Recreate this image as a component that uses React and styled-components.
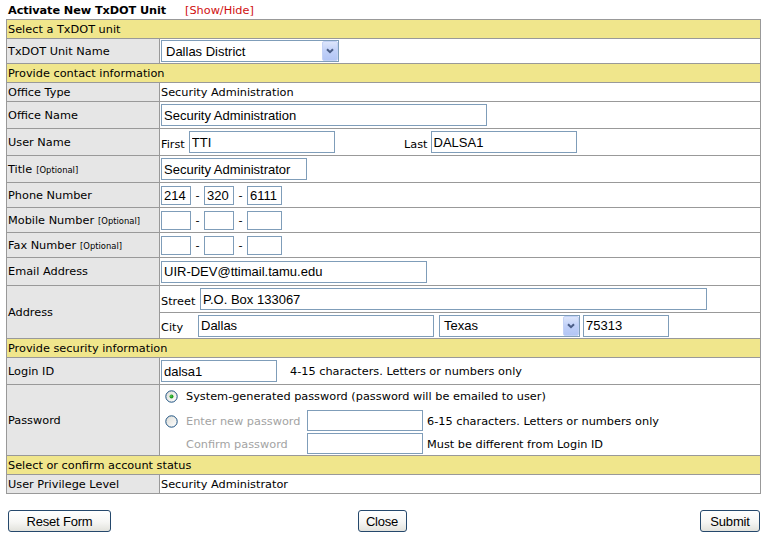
import React from "react";
import styled, { createGlobalStyle } from "styled-components";

const Global = createGlobalStyle`
  html, body { margin: 0; padding: 0; background: #fff; }
  body {
    font-family: "DejaVu Sans", Verdana, sans-serif;
    font-size: 11.3px;
    color: #000;
  }
`;

const Page = styled.div`
  width: 766px;
  padding-left: 6px;
  box-sizing: border-box;
`;

const TitleBar = styled.div`
  display: flex;
  align-items: center;
  height: 19px;
  padding: 1px 0 0 2px;
  box-sizing: border-box;
  gap: 19px;
`;

const Title = styled.span`
  font-weight: bold;
  letter-spacing: -0.1px;
`;

const ToggleLink = styled.a`
  color: #d01010;
  text-decoration: none;
  cursor: pointer;
`;

const FormTable = styled.div`
  width: 755px;
  box-sizing: border-box;
  border: 1px solid #999;
  border-bottom: none;
`;

const Section = styled.div`
  height: 18px;
  background: #f0e68c;
  border-bottom: 1px solid #999;
  display: flex;
  align-items: center;
  padding-left: 1px;
`;

const Row = styled.div`
  display: grid;
  grid-template-columns: 153px 1fr;
  height: ${(p) => p.$h}px;
  border-bottom: 1px solid #999;
`;

const Label = styled.div`
  background: #e6e6e6;
  border-right: 1px solid #999;
  display: flex;
  align-items: center;
  padding-left: 1px;
  white-space: nowrap;
`;

const Optional = styled.span`
  font-size: 8.4px;
  margin-left: 4px;
  margin-top: 2px;
`;

const Value = styled.div`
  display: flex;
  align-items: center;
  padding-left: 1px;
  white-space: nowrap;
`;

const TextInput = styled.input.attrs({ type: "text", readOnly: true })`
  width: ${(p) => p.$w}px;
  height: ${(p) => p.$hh || 22}px;
  box-sizing: border-box;
  border: 1px solid #7f9db9;
  margin: 0 0 0 ${(p) => p.$ml || 0}px;
  padding: 0 2px;
  font-family: "Liberation Sans", Arial, sans-serif;
  font-size: 13px;
  color: #000;
  background: #fff;
  outline: none;
`;

const SelectBox = styled.div`
  width: ${(p) => p.$w}px;
  height: 22px;
  box-sizing: border-box;
  border: 1px solid #7f9db9;
  margin-left: ${(p) => p.$ml || 0}px;
  display: flex;
  align-items: center;
  justify-content: space-between;
  padding-left: 4px;
  font-family: "Liberation Sans", Arial, sans-serif;
  font-size: 13px;
  background: #fff;
`;

const ArrowButton = styled.span`
  width: 16px;
  height: 20px;
  box-sizing: border-box;
  border: 1px solid #c3d2f6;
  border-radius: 2px;
  background: linear-gradient(#dde6fb, #c0d0f8 50%, #b3c6f5);
  display: flex;
  align-items: center;
  justify-content: center;
`;

const Caption = styled.span`
  align-self: flex-end;
  line-height: 14px;
  margin-bottom: 3px;
  width: ${(p) => (p.$w ? `${p.$w}px` : "auto")};
  margin-right: ${(p) => p.$mr || 0}px;
  flex: none;
`;

const NameGroup = styled.div`
  display: flex;
  align-items: center;
  height: 100%;
  width: ${(p) => (p.$w ? `${p.$w}px` : "auto")};
`;

const Dash = styled.span`
  width: 13px;
  text-align: center;
`;

const Hint = styled.span`
  margin-left: ${(p) => p.$ml}px;
`;

const AddressBlock = styled.div`
  display: flex;
  flex-direction: column;
`;

const SubRow = styled.div`
  height: ${(p) => p.$h}px;
  display: flex;
  align-items: center;
  padding-left: 1px;
  border-bottom: ${(p) => (p.$line ? "1px solid #999" : "none")};
`;

const PasswordGrid = styled.div`
  display: grid;
  grid-template-columns: 25px 121px 116px 1fr;
  grid-template-rows: 23px 24px 23px;
  align-items: center;
  padding-left: 1px;
`;

const RadioCell = styled.span`
  display: flex;
  align-items: center;
  padding-left: 4px;
  padding-top: ${(p) => p.$pt || 0}px;
`;

const WideText = styled.span`
  grid-column: 2 / 5;
`;

const GridText = styled.span`
  color: ${(p) => (p.$muted ? "#a3a3a3" : "#000")};
  padding-left: ${(p) => p.$pl || 0}px;
  padding-top: 2px;
`;

const Footer = styled.div`
  width: 755px;
  box-sizing: border-box;
  display: grid;
  grid-template-columns: 1fr auto 1fr;
  align-items: center;
  padding: 0 1px 0 2px;
  margin-top: 16px;
`;

const Button = styled.button`
  width: ${(p) => p.$w}px;
  height: 22px;
  box-sizing: border-box;
  border: 1px solid #25486c;
  border-radius: 3px;
  background: linear-gradient(#ffffff, #f6f6f4 55%, #e2e2dc);
  font-family: "Liberation Sans", Arial, sans-serif;
  font-size: 13px;
  color: #000;
  padding: 0;
  letter-spacing: -0.2px;
  justify-self: ${(p) => p.$place || "start"};
  margin-right: ${(p) => (p.$place === "center" ? 4 : 0)}px;
`;

function Chevron() {
  return (
    <svg width="8" height="6" viewBox="0 0 8 6">
      <path d="M1 1.2 L4 4.2 L7 1.2" fill="none" stroke="#4a5d86" strokeWidth="2" />
    </svg>
  );
}

function Select({ w, ml, children }) {
  return (
    <SelectBox $w={w} $ml={ml}>
      <span>{children}</span>
      <ArrowButton>
        <Chevron />
      </ArrowButton>
    </SelectBox>
  );
}

function Radio({ checked }) {
  const id = checked ? "rg1" : "rg2";
  return (
    <svg width="13" height="13" viewBox="0 0 13 13">
      <defs>
        <linearGradient id={id} x1="0" y1="0" x2="1" y2="1">
          <stop offset="0" stopColor="#dcdcd6" />
          <stop offset="1" stopColor="#ffffff" />
        </linearGradient>
      </defs>
      <circle cx="6.5" cy="6.5" r="5.7" fill={`url(#${id})`} stroke="#1c5180" strokeWidth="1" />
      {checked && <circle cx="6.5" cy="6.5" r="2" fill="#21a121" />}
      {checked && <circle cx="6" cy="6" r="0.8" fill="#6fd36f" />}
    </svg>
  );
}

function Phone({ a = "", b = "", c = "" }) {
  return (
    <>
      <TextInput $w={30} $hh={19} value={a} />
      <Dash>-</Dash>
      <TextInput $w={30} $hh={19} value={b} />
      <Dash>-</Dash>
      <TextInput $w={35} $hh={19} value={c} />
    </>
  );
}

export default function App() {
  return (
    <Page>
      <Global />
      <TitleBar>
        <Title>Activate New TxDOT Unit</Title>
        <ToggleLink>[Show/Hide]</ToggleLink>
      </TitleBar>
      <FormTable>
        <Section>Select a TxDOT unit</Section>
        <Row $h={24}>
          <Label>TxDOT Unit Name</Label>
          <Value>
            <Select w={178}>Dallas District</Select>
          </Value>
        </Row>
        <Section>Provide contact information</Section>
        <Row $h={18}>
          <Label>Office Type</Label>
          <Value>Security Administration</Value>
        </Row>
        <Row $h={26}>
          <Label>Office Name</Label>
          <Value>
            <TextInput $w={326} value="Security Administration" />
          </Value>
        </Row>
        <Row $h={26}>
          <Label>User Name</Label>
          <Value>
            <NameGroup $w={243}>
              <Caption $mr={3}>First</Caption>
              <TextInput $w={146} $ml={1} value="TTI" />
            </NameGroup>
            <NameGroup>
              <Caption $mr={3}>Last</Caption>
              <TextInput $w={146} value="DALSA1" />
            </NameGroup>
          </Value>
        </Row>
        <Row $h={26}>
          <Label>
            Title<Optional>[Optional]</Optional>
          </Label>
          <Value>
            <TextInput $w={146} value="Security Administrator" />
          </Value>
        </Row>
        <Row $h={24}>
          <Label>Phone Number</Label>
          <Value>
            <Phone a="214" b="320" c="6111" />
          </Value>
        </Row>
        <Row $h={24}>
          <Label>
            Mobile Number<Optional>[Optional]</Optional>
          </Label>
          <Value>
            <Phone />
          </Value>
        </Row>
        <Row $h={24}>
          <Label>
            Fax Number<Optional>[Optional]</Optional>
          </Label>
          <Value>
            <Phone />
          </Value>
        </Row>
        <Row $h={27}>
          <Label>Email Address</Label>
          <Value>
            <TextInput $w={266} value="UIR-DEV@ttimail.tamu.edu" />
          </Value>
        </Row>
        <Row $h={52}>
          <Label>Address</Label>
          <AddressBlock>
            <SubRow $h={26} $line>
              <Caption $w={39}>Street</Caption>
              <TextInput $w={507} value="P.O. Box 133067" />
            </SubRow>
            <SubRow $h={25}>
              <Caption $w={37}>City</Caption>
              <TextInput $w={236} value="Dallas" />
              <Select w={141} ml={5}>Texas</Select>
              <TextInput $w={86} $ml={3} value="75313" />
            </SubRow>
          </AddressBlock>
        </Row>
        <Section>Provide security information</Section>
        <Row $h={26}>
          <Label>Login ID</Label>
          <Value>
            <TextInput $w={116} value="dalsa1" />
            <Hint $ml={13}>4-15 characters. Letters or numbers only</Hint>
          </Value>
        </Row>
        <Row $h={70}>
          <Label>Password</Label>
          <PasswordGrid>
            <RadioCell>
              <Radio checked />
            </RadioCell>
            <WideText>System-generated password (password will be emailed to user)</WideText>
            <RadioCell $pt={3}>
              <Radio />
            </RadioCell>
            <GridText $muted>Enter new password</GridText>
            <TextInput $w={116} $hh={21} />
            <GridText $pl={4}>6-15 characters. Letters or numbers only</GridText>
            <span />
            <GridText $muted>Confirm password</GridText>
            <TextInput $w={116} $hh={21} />
            <GridText $pl={4}>Must be different from Login ID</GridText>
          </PasswordGrid>
        </Row>
        <Section>Select or confirm account status</Section>
        <Row $h={18}>
          <Label>User Privilege Level</Label>
          <Value>Security Administrator</Value>
        </Row>
      </FormTable>
      <Footer>
        <Button $w={103} $place="start">Reset Form</Button>
        <Button $w={49} $place="center">Close</Button>
        <Button $w={60} $place="end">Submit</Button>
      </Footer>
    </Page>
  );
}
